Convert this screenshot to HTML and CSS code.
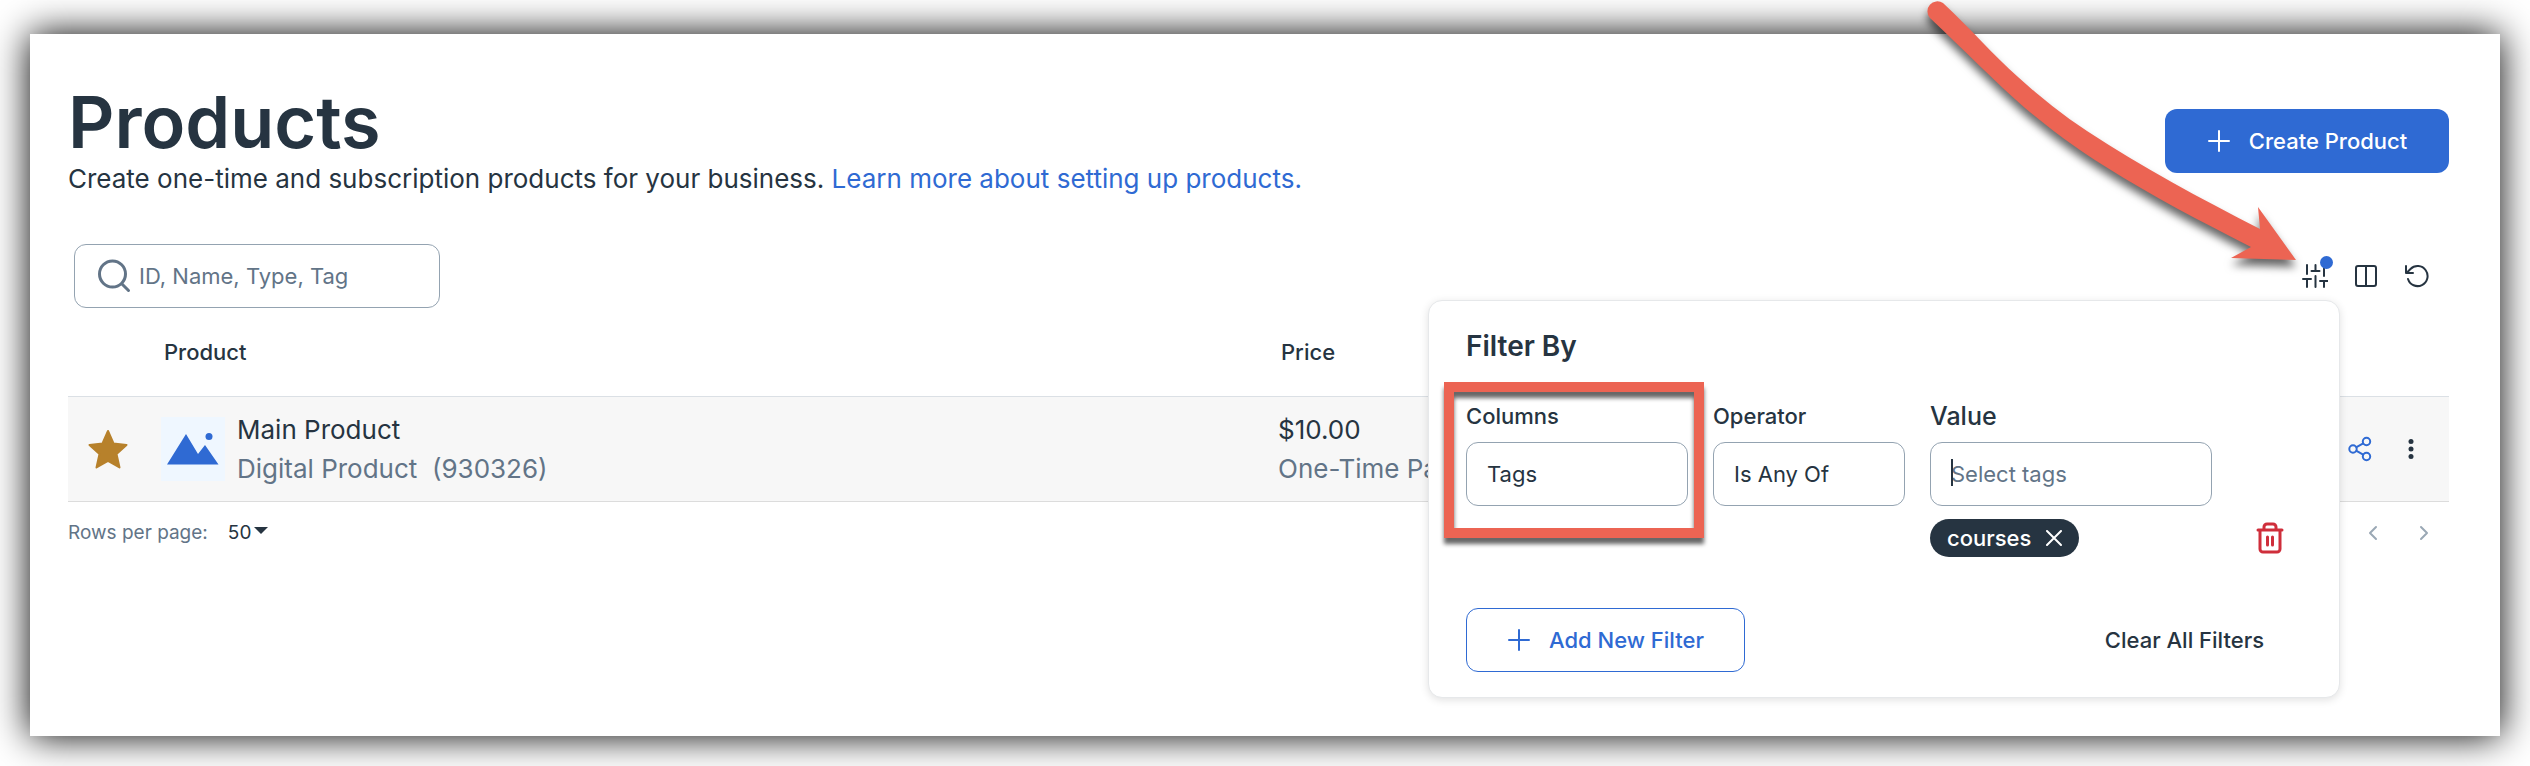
FILE: index.html
```
<!DOCTYPE html>
<html lang="en">
<head>
  <meta charset="UTF-8">
  <title>Products</title>
  <meta name="viewport" content="width=device-width, initial-scale=1.0">
  <link rel="stylesheet" href="styles.css">
</head>
<body>
  <main class="page">
    <header class="page-header">
      <div>
        <h1>Products</h1>
        <p>Create one-time and subscription products for your business. <a href="#">Learn more about setting up products.</a></p>
      </div>
      <button class="btn btn-primary" type="button">
        <svg width="24" height="24" viewBox="0 0 24 24"><path d="M12 2v20M2 12h20"/></svg>
        Create Product
      </button>
    </header>

    <div class="toolbar">
      <label class="search">
        <svg width="34" height="34" viewBox="0 0 34 34"><circle cx="15.500" cy="15" r="13"/><path d="M25 25l6.500 6.500"/></svg>
        <input type="search" placeholder="ID, Name, Type, Tag" aria-label="Search products">
      </label>
      <div class="tools">
        <button class="icon-btn" type="button" aria-label="Filters">
          <svg width="26" height="24" viewBox="0 0 26 24"><path d="M5 1v9M5 15v8M1 15h8M13.500 1v6M9.500 7h8M13.500 12v11M22 1v11M22 17v6M18 17h8"/></svg>
          <span class="dot"></span>
        </button>
        <button class="icon-btn" type="button" aria-label="Columns">
          <svg width="24" height="24" viewBox="0 0 24 24"><rect x="2" y="2" width="20" height="20" rx="2"/><path d="M12 2v20"/></svg>
        </button>
        <button class="icon-btn" type="button" aria-label="Reset">
          <svg width="24" height="24" viewBox="0 0 24 24"><path d="M1 2v7h7M1.500 9l4-4a10 10 0 1 1-2.500 10"/></svg>
        </button>
      </div>

      <!-- filter popover -->
      <form class="filter">
        <h2>Filter By</h2>
        <div class="filter-row">
          <div class="field field-marked">
            <label for="column">Columns</label>
            <select id="column"><option>Tags</option></select>
          </div>
          <div class="field">
            <label for="operator">Operator</label>
            <select id="operator"><option>Is Any Of</option></select>
          </div>
          <div class="field">
            <label class="label-lg" for="value">Value</label>
            <div class="value-box"><input id="value" type="text" placeholder="Select tags"></div>
            <span class="chip">courses
              <button type="button" aria-label="Remove courses">
                <svg width="16" height="16" viewBox="0 0 16 16"><path d="M1 1l14 14M15 1L1 15"/></svg>
              </button>
            </span>
          </div>
          <button class="trash" type="button" aria-label="Delete filter">
            <svg width="28" height="32" viewBox="0 0 28 32"><path d="M2 8h24M8 8V5a3 3 0 0 1 3-3h6a3 3 0 0 1 3 3v3M4 8v19a3 3 0 0 0 3 3h14a3 3 0 0 0 3-3V8"/><path d="M11.500 15v8M16.500 15v8"/></svg>
          </button>
        </div>
        <div class="filter-footer">
          <button class="btn btn-outline" type="button">
            <svg width="24" height="24" viewBox="0 0 24 24"><path d="M12 2v20M2 12h20"/></svg>
            Add New Filter
          </button>
          <button class="btn btn-text" type="reset">Clear All Filters</button>
        </div>
      </form>
    </div>

    <table class="products">
      <thead>
        <tr>
          <th class="col-star"></th>
          <th class="col-product">Product</th>
          <th class="col-price">Price</th>
          <th class="col-actions"></th>
        </tr>
      </thead>
      <tbody>
        <tr>
          <td class="col-star">
            <svg class="star" width="42" height="40" viewBox="0 0 42 40"><path d="M21 2l5.500 12.500 13 1.500-10 9 3 13.500L21 32 9.500 38.500l3-13.500-10-9 13-1.500z"/></svg>
          </td>
          <td class="col-product">
            <div class="product">
              <svg class="thumb" width="64" height="64" viewBox="0 0 64 64"><path d="M6 47.500L25 17l12 20 7-9 13.500 19.500z"/><circle cx="48" cy="19.500" r="3.500"/></svg>
              <div>
                <div>Main Product</div>
                <div class="muted">Digital Product&nbsp; (930326)</div>
              </div>
            </div>
          </td>
          <td class="col-price">
            <div>$10.00</div>
            <div class="muted">One-Time Payment</div>
          </td>
          <td class="col-actions">
            <div class="actions">
              <button class="icon-btn share" type="button" aria-label="Share">
                <svg width="24" height="26" viewBox="0 0 24 26"><circle cx="5" cy="13" r="3.700"/><circle cx="18.500" cy="5.500" r="3.700"/><circle cx="18.500" cy="20.500" r="3.700"/><path d="M8.500 11.200l6.700-3.800M8.500 14.800l6.700 3.800"/></svg>
              </button>
              <button class="icon-btn more" type="button" aria-label="More">
                <svg width="6" height="22" viewBox="0 0 6 22"><circle cx="3" cy="3.500" r="2.500"/><circle cx="3" cy="11" r="2.500"/><circle cx="3" cy="18.500" r="2.500"/></svg>
              </button>
            </div>
          </td>
        </tr>
      </tbody>
    </table>

    <footer class="pager">
      <label for="rows">Rows per page:</label>
      <div class="rows">
        <select id="rows"><option>50</option></select>
      </div>
      <div class="pager-nav">
        <button class="icon-btn" type="button" aria-label="Previous page"><svg width="10" height="16" viewBox="0 0 10 16"><path d="M8 2L2 8l6 6"/></svg></button>
        <button class="icon-btn" type="button" aria-label="Next page"><svg width="10" height="16" viewBox="0 0 10 16"><path d="M2 2l6 6-6 6"/></svg></button>
      </div>
    </footer>
  </main>

  <!-- callout arrow pointing at the filter button -->
  <svg class="arrow" width="400" height="290" viewBox="0 0 400 290">
    <path d="M43 3C70 28 94 56 118 77C140 97 163 115 187 131C243 168 300 198 360 229L358 207L396 260L331 258L351 247C300 221 252 196 206 167C177 149 150 129 125 108C94 81 65 51 30 18A10 10 0 0 1 43 3z"/>
  </svg>
</body>
</html>
```
FILE: styles.css
```
* {
  box-sizing: border-box;
}

body {
  margin: 0;
  position: relative;
  font-family: Inter, "Liberation Sans", sans-serif;
  font-size: 26px;
  color: #263441;
  background-color: #fff;
}

button,
input,
select {
  font: inherit;
  color: inherit;
  margin: 0;
}

button {
  padding: 0;
  border: none;
  background: none;
  cursor: pointer;
}

svg {
  display: block;
  fill: none;
  stroke: currentColor;
  stroke-width: 2;
  stroke-linecap: round;
  stroke-linejoin: round;
}

.page {
  min-height: calc(100vh - 64px);
  margin: 34px 30px 30px;
  padding: 50px 51px 40px 38px;
  background-color: #fff;
  box-shadow: 0 0 36px #000;
}

.page-header {
  display: flex;
  align-items: center;
  justify-content: space-between;
}

h1 {
  margin: 0;
  font-size: 72px;
  line-height: 76px;
  font-weight: 600;
}

.page-header p {
  margin: 0;
  line-height: 38px;
}

a {
  color: #2f6ad3;
  text-decoration: none;
}

.btn {
  display: flex;
  align-items: center;
  justify-content: center;
  gap: 18px;
  height: 64px;
  border-radius: 12px;
  font-size: 22px;
  font-weight: 500;
}

.btn-primary {
  width: 284px;
  color: #fff;
  background-color: #2f6ad3;
}

.btn-outline {
  width: 279px;
  color: #2f6ad3;
  border: 1px solid #2f6ad3;
}

.toolbar {
  position: relative;
  display: flex;
  align-items: center;
  justify-content: space-between;
  margin-top: 46px;
  padding: 0 7px 0 6px;
}

.search {
  display: flex;
  align-items: center;
  gap: 8px;
  width: 366px;
  height: 64px;
  padding: 0 22px;
  border: 1px solid #94a3b1;
  border-radius: 12px;
  color: #627487;
}

.search svg {
  flex: none;
  stroke-width: 3;
}

.search input {
  width: 100%;
  padding: 0;
  border: none;
  outline: none;
  background: none;
  font-size: 22px;
}

::placeholder {
  color: #627487;
  opacity: 1;
}

.tools,
.actions,
.pager-nav {
  display: flex;
}

.icon-btn {
  position: relative;
  display: flex;
  align-items: center;
  justify-content: center;
  width: 51px;
  height: 48px;
}

.dot {
  position: absolute;
  top: 4px;
  right: 7px;
  width: 13px;
  height: 13px;
  border-radius: 50%;
  background-color: #2f6ad3;
}

/* filter popover */
.filter {
  position: absolute;
  top: 56px;
  right: 109px;
  z-index: 1;
  width: 912px;
  padding: 25px 37px;
  border: 1px solid #e6e8ea;
  border-radius: 14px;
  background-color: #fff;
  box-shadow: 0 2px 8px rgba(0, 0, 0, 0.12);
}

h2 {
  margin: 0 0 35px;
  font-size: 28px;
  line-height: 40px;
  font-weight: 600;
}

.filter-row {
  display: grid;
  grid-template-columns: 222px 192px 282px 1fr;
  align-items: start;
  gap: 25px;
}

.field {
  position: relative;
}

.field label {
  display: block;
  margin-bottom: 11px;
  font-size: 22px;
  line-height: 30px;
  font-weight: 500;
}

.field .label-lg {
  font-size: 25px;
}

.field select,
.field input {
  display: block;
  width: 100%;
  height: 64px;
  padding: 0 20px;
  border: 1px solid #94a3b1;
  border-radius: 12px;
  outline: none;
  appearance: none;
  background-color: #fff;
  font-size: 22px;
}

/* red highlight round the first field */
.field-marked::before {
  content: "";
  position: absolute;
  inset: -19px -16px -32px -22px;
  border: 10px solid #ec6453;
  filter: drop-shadow(0 6px 2px rgba(0, 0, 0, 0.6));
  pointer-events: none;
}

.value-box {
  position: relative;
}

.value-box::before {
  content: "";
  position: absolute;
  top: 17px;
  left: 21px;
  width: 2px;
  height: 27px;
  background-color: #263441;
}

.chip {
  display: inline-flex;
  align-items: center;
  gap: 15px;
  height: 38px;
  margin-top: 13px;
  padding: 0 17px;
  border-radius: 19px;
  color: #fff;
  background-color: #263441;
  font-size: 22px;
  font-weight: 500;
  vertical-align: top;
}

.trash {
  align-self: end;
  justify-self: center;
  color: #cf2e3b;
  margin-bottom: 3px;
}

.trash svg {
  stroke-width: 3;
}

.filter-footer {
  display: flex;
  justify-content: space-between;
  margin-top: 51px;
  padding-right: 38px;
}

/* product table */
.products {
  width: 100%;
  border-collapse: collapse;
  table-layout: fixed;
}

.products th {
  height: 88px;
  padding: 0;
  font-size: 22px;
  font-weight: 500;
  text-align: left;
}

.products td {
  height: 105px;
  padding: 0;
  line-height: 39px;
  background-color: #f7f7f7;
  border-top: 1px solid #dbe0e5;
  border-bottom: 1px solid #dcdcdc;
}

.products .col-star {
  width: 93px;
}

.products .col-product {
  width: 1117px;
}

.products th.col-product,
.products th.col-price {
  padding-left: 3px;
}

.products .col-actions {
  width: 120px;
}

.star {
  margin-left: 19px;
  fill: #b7812b;
  stroke: #b7812b;
}

.product {
  display: flex;
  align-items: center;
  gap: 12px;
}

.thumb {
  background-color: #eff7ff;
  fill: #2f6ad3;
  stroke: none;
}

.muted {
  color: #627487;
}

.actions {
  justify-content: flex-end;
  padding-right: 13px;
}

.share {
  color: #2f6ad3;
}

.more svg {
  fill: currentColor;
  stroke: none;
}

.pager {
  display: flex;
  align-items: center;
  height: 62px;
  font-size: 19px;
  color: #627487;
}

.rows {
  position: relative;
  margin-left: 20px;
  color: #263441;
}

.rows select {
  display: block;
  padding: 0 16px 0 0;
  border: none;
  appearance: none;
  background: none;
}

.rows::after {
  content: "";
  position: absolute;
  top: 6px;
  right: 0;
  border: 7px solid transparent;
  border-top-color: currentColor;
  border-bottom: none;
  pointer-events: none;
}

.pager-nav {
  margin-left: auto;
  color: #9aa8b5;
}

.arrow {
  position: absolute;
  top: 0;
  right: 230px;
  z-index: 2;
  overflow: visible;
  fill: #ec6453;
  stroke: none;
  filter: drop-shadow(0 7px 4px rgba(0, 0, 0, 0.6));
  pointer-events: none;
}
```
